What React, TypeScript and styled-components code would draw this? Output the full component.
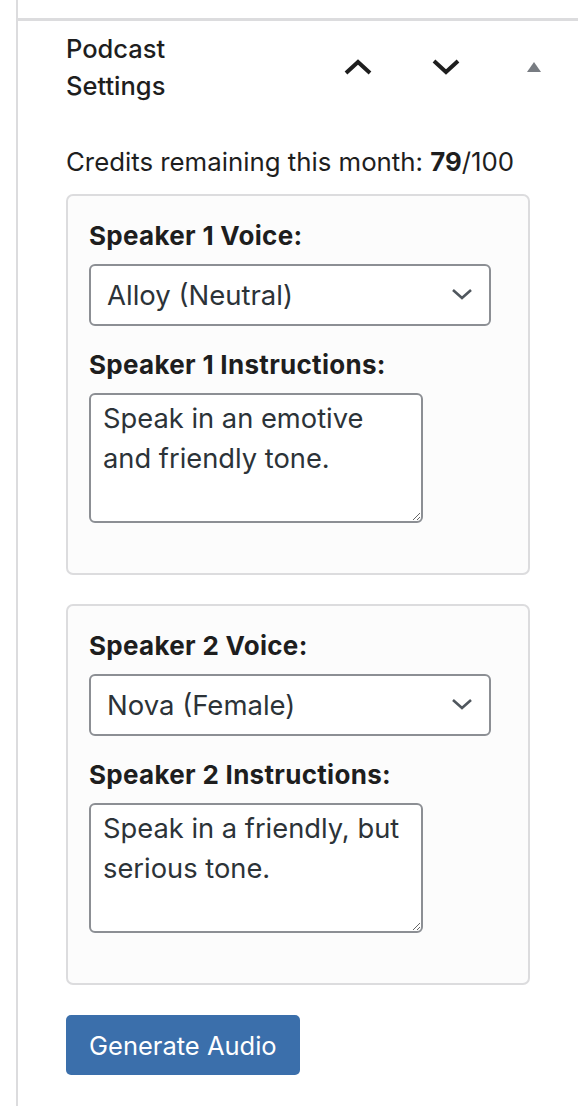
import React from "react";
import styled, { createGlobalStyle } from "styled-components";

const GlobalStyle = createGlobalStyle`
  html, body {
    margin: 0;
    padding: 0;
    background: #fff;
  }
  body {
    font-family: Inter, "Noto Sans", "Liberation Sans", sans-serif;
    color: #1e1e1e;
  }
`;

const Page = styled.div`
  padding-left: 16px;
  min-height: 1106px;
`;

const Panel = styled.div`
  border-left: 2px solid #dcdcde;
  min-height: 1106px;
`;

const TopStrip = styled.div`
  height: 18px;
  border-bottom: 3px solid #dcdcde;
`;

const Header = styled.div`
  display: flex;
  align-items: center;
  height: 92px;
  padding-left: 48px;
`;

const Title = styled.h2`
  flex: 1;
  margin: 0;
  font-size: 25.5px;
  font-weight: 500;
  line-height: 37px;
  max-width: 150px;
`;

const HandleButton = styled.button`
  width: 88px;
  height: 88px;
  display: flex;
  align-items: center;
  justify-content: center;
  background: none;
  border: 0;
  padding: 0;
  margin-left: auto;
  & + & {
    margin-left: 0;
  }
`;

const Body = styled.div`
  padding: 30px 48px 0;
  display: flex;
  flex-direction: column;
`;

const Credits = styled.p`
  margin: 0 0 13px;
  font-size: 25.8px;
  line-height: 38px;
  b {
    font-weight: 700;
  }
`;

const SpeakerBox = styled.div`
  border: 2px solid #dcdcde;
  border-radius: 7px;
  background: #fcfcfc;
  padding: 21px 0 50px 21px;
  margin-bottom: 29px;
  display: flex;
  flex-direction: column;
  align-items: flex-start;
`;

const Label = styled.label`
  font-size: 26px;
  font-weight: 700;
  letter-spacing: 0.3px;
  line-height: 38px;
  margin-bottom: 9px;
`;

const SelectWrap = styled.div`
  position: relative;
  width: 402px;
  margin-bottom: 20px;
`;

const Select = styled.select`
  appearance: none;
  width: 100%;
  height: 62px;
  border: 2px solid #8c8f94;
  border-radius: 6px;
  background: #fff;
  padding: 0 60px 0 16px;
  font-family: inherit;
  font-size: 27.5px;
  color: #2c3338;
`;

const SelectArrow = styled.svg`
  position: absolute;
  right: 18px;
  top: 23px;
  pointer-events: none;
`;

const TextArea = styled.textarea`
  width: 334px;
  height: 130px;
  box-sizing: border-box;
  border: 2px solid #8c8f94;
  border-radius: 6px;
  background: #fff;
  padding: 4px 12px;
  font-family: inherit;
  font-size: 27.3px;
  line-height: 40px;
  color: #2c3338;
  resize: both;
`;

const GenerateButton = styled.button`
  align-self: flex-start;
  height: 60px;
  padding: 0 23px;
  border: 0;
  border-radius: 5px;
  background: #3b6fab;
  color: #fff;
  font-family: inherit;
  font-size: 25.5px;
  margin-top: 1px;
`;

const ChevronUp = () => (
  <svg width="30" height="18" viewBox="0 0 30 18">
    <polyline points="3,15 15,4 27,15" fill="none" stroke="#1e1e1e" strokeWidth="4" />
  </svg>
);

const ChevronDown = () => (
  <svg width="30" height="18" viewBox="0 0 30 18">
    <polyline points="3,3 15,14 27,3" fill="none" stroke="#1e1e1e" strokeWidth="4" />
  </svg>
);

const Triangle = () => (
  <svg width="16" height="12" viewBox="0 0 16 12">
    <polygon points="8,1 15,11 1,11" fill="#787c82" />
  </svg>
);

interface SpeakerProps {
  num: number;
  voice: string;
  instructions: string;
}

const voices = [
  "Alloy (Neutral)",
  "Echo (Male)",
  "Fable (Neutral)",
  "Onyx (Male)",
  "Nova (Female)",
  "Shimmer (Female)",
];

const Speaker = ({ num, voice, instructions }: SpeakerProps) => (
  <SpeakerBox>
    <Label htmlFor={`voice-${num}`}>Speaker {num} Voice:</Label>
    <SelectWrap>
      <Select id={`voice-${num}`} defaultValue={voice}>
        {voices.map((v) => (
          <option key={v}>{v}</option>
        ))}
      </Select>
      <SelectArrow width="22" height="14" viewBox="0 0 22 14">
        <polyline points="2,3 11,11 20,3" fill="none" stroke="#50575e" strokeWidth="2.6" />
      </SelectArrow>
    </SelectWrap>
    <Label htmlFor={`instr-${num}`}>Speaker {num} Instructions:</Label>
    <TextArea id={`instr-${num}`} defaultValue={instructions} />
  </SpeakerBox>
);

export default function App() {
  return (
    <>
      <GlobalStyle />
      <Page>
        <Panel>
          <TopStrip />
          <Header>
            <Title>Podcast Settings</Title>
            <HandleButton aria-label="Move up">
              <ChevronUp />
            </HandleButton>
            <HandleButton aria-label="Move down">
              <ChevronDown />
            </HandleButton>
            <HandleButton aria-label="Toggle panel">
              <Triangle />
            </HandleButton>
          </Header>
          <Body>
            <Credits>
              Credits remaining this month: <b>79</b>/100
            </Credits>
            <Speaker
              num={1}
              voice="Alloy (Neutral)"
              instructions="Speak in an emotive and friendly tone."
            />
            <Speaker
              num={2}
              voice="Nova (Female)"
              instructions="Speak in a friendly, but serious tone."
            />
            <GenerateButton>Generate Audio</GenerateButton>
          </Body>
        </Panel>
      </Page>
    </>
  );
}
